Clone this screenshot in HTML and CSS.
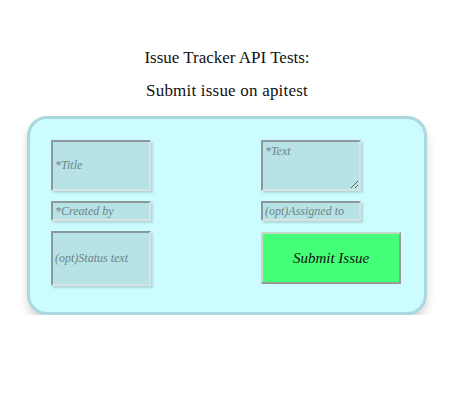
FILE: index.html
```html
<!DOCTYPE html>
<html>
<head>
<meta charset="utf-8">
<link rel="stylesheet" href="styles.css">
</head>
<body>
<main class="page">
  <h1 class="heading">Issue Tracker API Tests:</h1>
  <h2 class="heading sub">Submit issue on apitest</h2>
  <form class="card">
    <input class="field tall" type="text" placeholder="*Title" autofocus>
    <textarea class="field tall area" placeholder="*Text"></textarea>
    <input class="field short" type="text" placeholder="*Created by">
    <input class="field short" type="text" placeholder="(opt)Assigned to">
    <input class="field status" type="text" placeholder="(opt)Status text">
    <button class="submit" type="button">Submit Issue</button>
  </form>
</main>
</body>
</html>
```
FILE: styles.css
```css
html, body {
  margin: 0;
  background: #ffffff;
}
.page {
  width: 400px;
  margin-left: 27px;
  padding-top: 48px;
  display: flex;
  flex-direction: column;
  font-family: "Liberation Serif", "DejaVu Serif", serif;
  color: #111;
}
.heading {
  margin: 0;
  text-align: center;
  font-size: 17px;
  font-weight: normal;
  line-height: 20px;
}
.sub {
  margin-top: 13px;
  letter-spacing: 0.2px;
}
.card {
  margin-top: 15px;
  box-sizing: border-box;
  width: 400px;
  border: 3px solid #a9d9dc;
  border-radius: 20px;
  background: #ccfcff;
  box-shadow: 0 6px 8px rgba(0,0,0,0.16);
  padding: 21px 24px 26px 21px;
  display: grid;
  grid-template-columns: 210px 1fr;
  row-gap: 10px;
  align-items: start;
}
.field {
  box-sizing: border-box;
  width: 100px;
  margin: 0;
  padding: 0 2px;
  border: 2px solid;
  border-color: #8c9899 #d8e4e4 #d8e4e4 #8c9899;
  background: #b7e2e6;
  box-shadow: 2px 2px 2px rgba(0,0,0,0.15);
  font-family: "Liberation Serif", serif;
  font-style: italic;
  font-size: 12px;
  color: #333;
  caret-color: #000;
  outline: none;
}
.field::placeholder {
  color: #6d8587;
  opacity: 1;
}
.tall {
  height: 51px;
}
.area {
  resize: both;
  padding-top: 2px;
  line-height: 14px;
}
.short {
  height: 20px;
}
.status {
  height: 55px;
}
.submit {
  box-sizing: border-box;
  width: 140px;
  height: 52px;
  margin: 1px 0 0 0;
  border: 2px solid;
  border-color: #c5d8cc #959c98 #959c98 #c5d8cc;
  background: #44ff77;
  font-family: "Liberation Serif", serif;
  font-style: italic;
  font-size: 15px;
  color: #111;
  cursor: pointer;
}
```
